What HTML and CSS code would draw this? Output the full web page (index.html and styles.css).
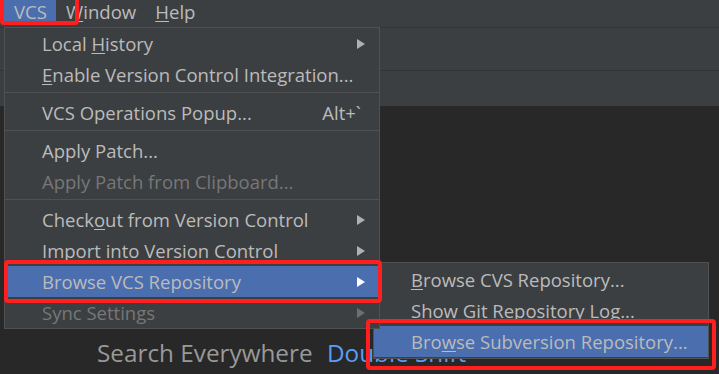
FILE: index.html
```html
<!DOCTYPE html>
<html>
	<head>
		<title>VCS menu</title>
		<link rel="stylesheet" href="styles.css">
	</head>
	<body>
		<div class="screen">
			<div class="menubar">
				<span class="mb-item active">VC<u>S</u></span>
				<span class="mb-item"><u>W</u>indow</span>
				<span class="mb-item"><u>H</u>elp</span>
			</div>
			<div class="toolbar"></div>
			<div class="navbar"></div>
			<div class="editor">
				<div class="hint">Search Everywhere <span class="key">Double Shift</span></div>
			</div>

			<div class="menu main-menu">
				<div class="item"><span class="label">Local <u>H</u>istory</span><span class="arrow"></span></div>
				<div class="item"><span class="label"><u>E</u>nable Version Control Integration...</span></div>
				<div class="sep"></div>
				<div class="item"><span class="label">VCS Operations Popup...</span><span class="shortcut">Alt+`</span></div>
				<div class="sep"></div>
				<div class="item"><span class="label">Apply Patch...</span></div>
				<div class="item disabled"><span class="label">Apply Patch from Clipboard...</span></div>
				<div class="sep"></div>
				<div class="item"><span class="label">Check<u>o</u>ut from Version Control</span><span class="arrow"></span></div>
				<div class="item"><span class="label">Import into Version Control</span><span class="arrow"></span></div>
				<div class="item selected"><span class="label">Browse VCS Repository</span><span class="arrow"></span></div>
				<div class="item disabled"><span class="label">Sync Settings</span><span class="arrow"></span></div>
			</div>

			<div class="menu sub-menu">
				<div class="item"><span class="label"><u>B</u>rowse CVS Repository...</span></div>
				<div class="item"><span class="label">Show Git Repository Log...</span></div>
				<div class="item selected"><span class="label">Bro<u>w</u>se Subversion Repository...</span></div>
			</div>

			<div class="mark mark-vcs"></div>
			<div class="mark mark-browse"></div>
			<div class="mark mark-svn"></div>
		</div>
	</body>
</html>
```

FILE: styles.css
```css
body {
	margin: 0;
	background: #282828;
	font-family: "Open Sans", "Noto Sans", sans-serif;
	color: #bbbbbb;
}

.screen {
	position: relative;
	width: 719px;
	height: 374px;
	overflow: hidden;
	display: flex;
	flex-direction: column;
}

.menubar {
	height: 27px;
	border-bottom: 1px solid #313335;
	background: #3c3f41;
	display: flex;
	padding-left: 4px;
	font-size: 18.6px;
	line-height: 24px;
}

.mb-item {
	padding: 0 9px 0 10px;
	height: 24px;
}

.mb-item.active {
	background: #4b6eaf;
}

u {
	text-underline-offset: 2px;
	text-decoration-thickness: 1px;
}

.toolbar {
	height: 42px;
	border-bottom: 1px solid #313335;
	background: #3c3f41;
}

.navbar {
	height: 35px;
	background: #3c3f41;
}

.editor {
	flex: 1;
	background: #282828;
	display: flex;
	flex-direction: column;
	justify-content: flex-end;
	padding: 0 0 6px 97px;
}

.hint {
	font-size: 24.3px;
	line-height: 30px;
	color: #999999;
}

.key {
	margin-left: 8px;
	color: #589df6;
}

/* popup menus */

.menu {
	position: absolute;
	box-sizing: border-box;
	background: #3c3f41;
	border: 1px solid #515151;
	font-size: 18.5px;
}

.main-menu {
	top: 27px;
	left: 4px;
	width: 376px;
	z-index: 2;
}

.sub-menu {
	top: 262px;
	left: 373px;
	width: 336px;
	padding: 1px 0;
	z-index: 1;
}

.item {
	height: 31px;
	display: flex;
	align-items: center;
	padding: 0 14px 0 37px;
	white-space: nowrap;
}

.item .label {
	flex: 1;
}

.item.selected {
	background: #4b6eaf;
}

.item.disabled {
	color: #777777;
}

.shortcut {
	margin-right: 4px;
}

.arrow {
	width: 0;
	height: 0;
	border-left: 8px solid #afb1b3;
	border-top: 5.5px solid transparent;
	border-bottom: 5.5px solid transparent;
}

.selected .arrow {
	border-left-color: #ffffff;
}

.disabled .arrow {
	border-left-color: #6e6e6e;
}

.sep {
	height: 7px;
	padding: 2px 0 4px;
	box-sizing: border-box;
}

.sep::after {
	content: "";
	display: block;
	height: 1px;
	background: #515151;
}

/* red annotation frames */

.mark {
	position: absolute;
	box-sizing: border-box;
	border: 4px solid #ff1f1f;
	border-radius: 4px;
	z-index: 3;
}

.mark-vcs {
	left: 0;
	top: -5px;
	width: 79px;
	height: 30px;
}

.mark-browse {
	left: 4px;
	top: 260px;
	width: 378px;
	height: 43px;
}

.mark-svn {
	left: 366px;
	top: 319px;
	width: 350px;
	height: 51px;
}
```
